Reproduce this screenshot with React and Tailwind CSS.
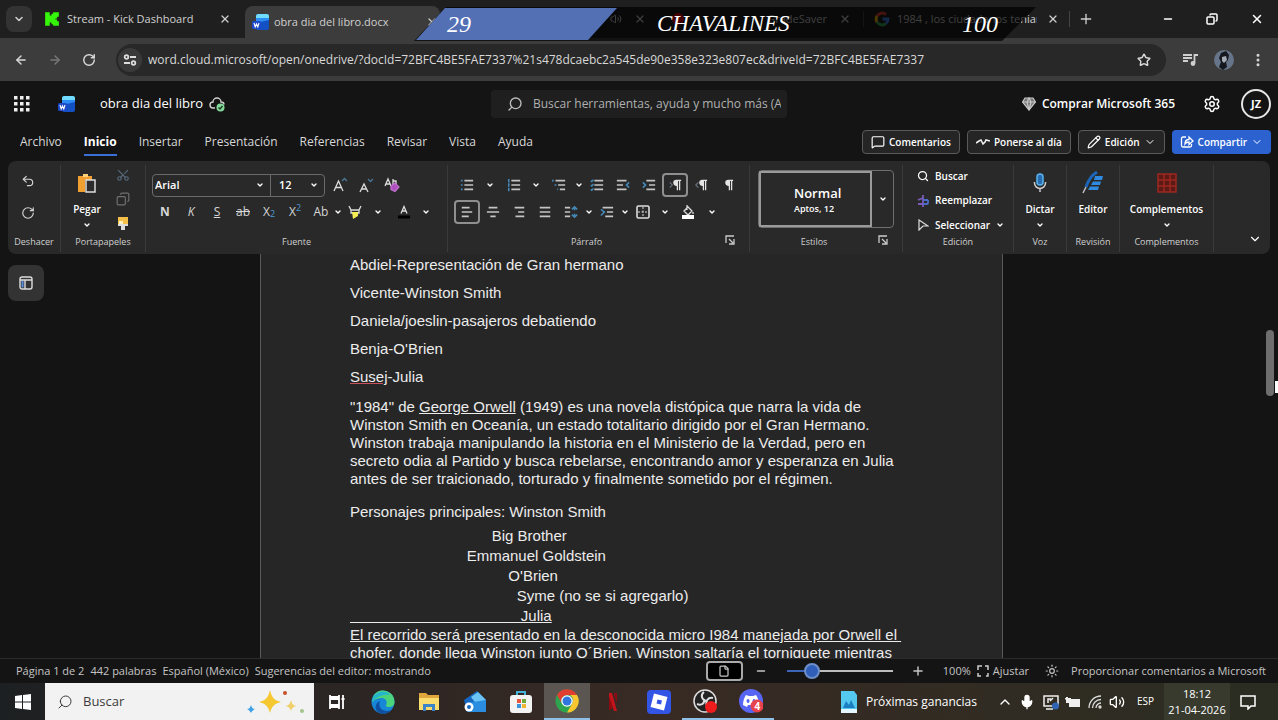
import React, { useState } from 'react';
import {
  ArrowLeft, ArrowRight, ChevronDown, ChevronUp, Copy, Minus, Mic, Plus, RotateCw, Scissors,
  Search, Settings, Star, Undo2, Volume2, X, EllipsisVertical, MessageSquare, Pencil, File, Sun,
} from 'lucide-react';

const Chevron = ({ className = '' }) => (
  <span className={`flex shrink-0 items-center justify-center ${className}`}>
    <ChevronDown className="size-2" strokeWidth={4} />
  </span>
);

const Tool = ({ label, className = 'w-[26px]', active, children }) => (
  <button
    aria-label={label}
    className={`flex h-6 shrink-0 items-center justify-center text-[#d6d6d6] ${className} ${active ? 'rounded border-2 border-[#8f8f8f]' : ''}`}
  >
    {children}
  </button>
);

const Lines = ({ rows, blue }) => (
  <svg viewBox="0 0 16 16" className="size-3.5" fill="none" strokeWidth="1.8">
    <path stroke="#c4c4c4" d={rows} />
    {blue && <path stroke="#4389b8" strokeWidth="1.8" d={blue} />}
  </svg>
);

const Pilcrow = ({ arrow }) => (
  <svg viewBox="0 0 16 16" className="size-3.5">
    <path fill="#e4e4e4" d="M9 2h6v1.500h-1V14h-1.400V3.500H11.500V14H10V9A3.500 3.500 0 0 1 9 2z" />
    {arrow && <path d={arrow} fill="none" stroke="#68737e" strokeWidth="1.300" />}
  </svg>
);

const WordLogo = () => (
  <svg viewBox="0 0 18 18" className="size-[18px] shrink-0">
    <path fill="#6fdcff" d="M6 1h9a2 2 0 0 1 2 2v4H4V3a2 2 0 0 1 2-2z" />
    <path fill="#2b8df5" d="M4 5h13v7H4z" />
    <path fill="#1350c4" d="M4 10l13-3v8a2 2 0 0 1-2 2H6a2 2 0 0 1-2-2z" />
    <rect x="0" y="8" width="9" height="8" rx="1.500" fill="#1d49c9" />
    <path d="M2 10l1.200 4L4.500 11l1.300 3L7 10" fill="none" stroke="#fff" strokeWidth="1.100" />
  </svg>
);

const GoogleLogo = () => (
  <svg viewBox="0 0 16 16" className="size-4 shrink-0" fill="none" strokeWidth="3">
    <path stroke="#ea4335" d="M3 5a6 6 0 0 1 9-1.500" />
    <path stroke="#fbbc05" d="M3 11a6 6 0 0 1 0-6" />
    <path stroke="#34a853" d="M12 12.500A6 6 0 0 1 3 11" />
    <path stroke="#4285f4" d="M8.500 8H14a6 6 0 0 1-2 4.500" />
  </svg>
);

const BrowserTabs = () => (
  <div className="relative flex h-[38px] shrink-0 items-center bg-[#1f1f1f] text-[11px] text-[#d0d0d0]">
    <button aria-label="Buscar pestañas" className="ml-1.5 flex size-[26px] items-center justify-center rounded-lg bg-[#333]">
      <ChevronDown className="size-3" strokeWidth={3} />
    </button>
    <div className="ml-3 flex w-[201px] items-center">
      <svg viewBox="0 0 14 14" className="size-4"><path fill="#35f50a" d="M1 1h4v3h1.500V2.500H8V1h5v4h-1.500v1.500H10v1h1.500V9H13v4H8v-1.500H6.500V10H5v3H1z" /></svg>
      <span className="ml-[7px] flex-1 whitespace-nowrap">Stream - Kick Dashboard</span>
      <button aria-label="Cerrar" className="mr-3.5"><X className="size-3" strokeWidth={2.5} /></button>
    </div>
    <div className="flex h-8 w-[195px] items-center self-end rounded-t-lg bg-[#3c3c3c] pl-[7px] pr-0.5">
      <WordLogo />
      <span className="ml-1 flex-1 whitespace-nowrap">obra dia del libro.docx</span>
      <button aria-label="Cerrar"><X className="size-3" strokeWidth={2.5} /></button>
    </div>
    <div className="flex w-[208px] items-center justify-end gap-3 pr-0.5">
      <Volume2 className="size-3" />
      <button aria-label="Cerrar"><X className="size-3" strokeWidth={2.5} /></button>
    </div>
    <div className="flex w-[216px] items-center border-r border-[#444] pl-6 pr-3">
      <span className="size-3 rounded-full bg-red-600" />
      <span className="mr-3 flex-1 text-right">GradeSaver</span>
      <button aria-label="Cerrar"><X className="size-3" strokeWidth={2.5} /></button>
    </div>
    <div className="flex w-[206px] items-center border-r border-[#444] px-2.5">
      <GoogleLogo />
      <span className="ml-[7px] w-[140px] overflow-hidden whitespace-nowrap">1984 , los ciudadanos tenian</span>
      <button aria-label="Cerrar" className="ml-auto"><X className="size-3" strokeWidth={2.5} /></button>
    </div>
    <button aria-label="Nueva pestaña" className="ml-2"><Plus className="size-4" /></button>
    <div className="ml-auto flex items-center gap-8 pr-3.5 text-white">
      <button aria-label="Minimizar"><Minus className="size-3" strokeWidth={3} /></button>
      <button aria-label="Restaurar"><Copy className="size-3 -scale-x-100" strokeWidth={3} /></button>
      <button aria-label="Cerrar ventana"><X className="size-3.5" strokeWidth={2.5} /></button>
    </div>

    {/* stream scoreboard */}
    <div className="absolute left-[414px] top-[7px] z-10 h-[34px] w-[622px] font-['Liberation_Serif',serif] text-2xl italic text-white">
      <div className="absolute inset-0 bg-black/70 [clip-path:polygon(32px_0,100%_0,588px_100%,0_100%)]" />
      <div className="absolute left-0.5 top-px h-8 w-[201px] bg-[#5370b5] [clip-path:polygon(29px_0,100%_0,172px_100%,0_100%)]" />
      <div className="relative flex h-full items-center">
        <span className="w-[243px] pl-[33px]">29</span>
        <span className="flex-1 text-[23px]">CHAVALINES</span>
        <span className="pr-[38px]">100</span>
      </div>
    </div>
  </div>
);

const AddressBar = () => (
  <div className="flex h-[43px] shrink-0 items-center bg-[#3c3c3c] text-[#d8d8d8]">
    <button aria-label="Atrás" className="ml-3.5"><ArrowLeft className="size-3.5" strokeWidth={2.5} /></button>
    <button aria-label="Adelante" className="ml-5 text-[#777]"><ArrowRight className="size-3.5" strokeWidth={2.5} /></button>
    <button aria-label="Recargar" className="ml-5"><RotateCw className="size-3.5" strokeWidth={2.5} /></button>
    <div className="ml-5 flex h-8 flex-1 items-center rounded-full bg-[#282828]">
      <span className="ml-0.5 flex size-6 items-center justify-center rounded-full bg-[#3a3a3a]">
        <svg viewBox="0 0 14 14" className="size-3.5" fill="none" stroke="#ddd" strokeWidth="1.800"><circle cx="3.500" cy="4" r="1.800" /><path d="M7 4h6M1 10h6" /><circle cx="10.500" cy="10" r="1.800" /></svg>
      </span>
      <input
        aria-label="Dirección"
        className="ml-1.5 min-w-0 flex-1 bg-transparent text-xs outline-none"
        defaultValue="word.cloud.microsoft/open/onedrive/?docId=72BFC4BE5FAE7337%21s478dcaebc2a545de90e358e323e807ec&driveId=72BFC4BE5FAE7337"
      />
      <button aria-label="Favorito" className="mr-[15px]"><Star className="size-3.5" strokeWidth={2.5} /></button>
    </div>
    <svg viewBox="0 0 16 16" className="ml-4 size-4" fill="none" stroke="#cfcfcf" strokeWidth="1.800"><path d="M1 3h9M1 6h9M1 9h5M12.500 11V3H16" /><circle cx="11" cy="11.500" r="1.500" fill="#cfcfcf" /></svg>
    <svg viewBox="0 0 20 20" className="ml-4 size-5"><circle cx="10" cy="10" r="10" fill="#66758a" /><path fill="#15181e" d="M7 3l5-2 3 4-1 5-2 2 1 5-4 3-4-3 2-5-2-4z" /><path fill="#a4abb5" d="M8 7l4-1 1 4-3 3-2-2z" /></svg>
    <button aria-label="Menú" className="ml-4 mr-3"><EllipsisVertical className="size-4" strokeWidth={2.5} /></button>
  </div>
);

const WordHeader = () => (
  <div className="grid h-[46px] shrink-0 grid-cols-[1fr_296px_1fr] items-center">
    <div className="flex items-center">
      <svg viewBox="0 0 16 16" className="ml-3.5 size-4" fill="#eee"><path d="M0 0h3.500v3.500H0zM6 0h3.500v3.500H6zM12 0h3.500v3.500H12zM0 6h3.500v3.500H0zM6 6h3.500v3.500H6zM12 6h3.500v3.500H12zM0 12h3.500v3.500H0zM6 12h3.500v3.500H6zM12 12h3.500v3.500H12z" /></svg>
      <span className="ml-7"><WordLogo /></span>
      <h1 className="ml-6 text-[13px]">obra dia del libro</h1>
      <svg viewBox="0 0 16 16" className="ml-1.5 size-4" fill="none" stroke="#cfcfcf" strokeWidth="1.400"><path d="M6 12H4a3 3 0 0 1 0-6 4 4 0 0 1 8 0c2 0 3 1 3 2.500" /><circle cx="11.500" cy="11.500" r="4" fill="#84d99a" stroke="none" /><path stroke="#1c3a24" d="M9.500 11.500l1.500 1.500 2.500-3" /></svg>
    </div>
    <div className="flex h-7 items-center rounded bg-[#1f1f1f] pl-4 text-[#bdbdbd]">
      <Search className="size-4 -scale-x-100" />
      <input aria-label="Buscar" placeholder="Buscar herramientas, ayuda y mucho más (Alt + Q)" className="ml-2.5 mr-1.5 min-w-0 flex-1 bg-transparent text-xs outline-none placeholder:text-[#b0b0b0]" />
    </div>
    <div className="flex items-center justify-end">
      <svg viewBox="0 0 14 14" className="size-3.5" fill="none" stroke="#c8c8c8" strokeWidth="1.200"><path fill="#777" d="M3 1h8l2.500 4L7 13 .5 5z" /><path d="M.5 5h13M5 5l2 8 2-8-2-4z" /></svg>
      <button className="ml-1.5 text-xs font-semibold">Comprar Microsoft 365</button>
      <button aria-label="Configuración" className="ml-7"><Settings className="size-[18px]" /></button>
      <button className="ml-5 mr-[7px] size-[30px] rounded-full border-2 border-[#e6e6e6] text-[11px] font-bold">JZ</button>
    </div>
  </div>
);

const tabs = ['Archivo', 'Inicio', 'Insertar', 'Presentación', 'Referencias', 'Revisar', 'Vista', 'Ayuda'];

const actionButton = 'flex h-6 items-center gap-1 rounded border border-[#5a5a5a] bg-[#252525] px-2 text-[10px] font-semibold';

const RibbonTabs = () => {
  const [current, setCurrent] = useState('Inicio');
  return (
    <div className="flex h-[30px] shrink-0 items-center justify-between pl-5 pr-[7px]">
      <nav className="flex gap-[22px] pt-0.5 text-xs text-[#d8d8d8]">
        {tabs.map((tab) => (
          <button
            key={tab}
            onClick={() => setCurrent(tab)}
            className={tab === current ? 'border-b-2 border-[#3b6fd4] font-bold leading-6 text-white' : 'border-b-2 border-transparent leading-6'}
          >
            {tab}
          </button>
        ))}
      </nav>
      <div className="flex gap-[7px]">
        <button className={actionButton}><MessageSquare className="size-3.5" />Comentarios</button>
        <button className={actionButton}>
          <svg viewBox="0 0 14 14" className="size-3.5" fill="none" stroke="#eee" strokeWidth="1.600"><path d="M0 8l3-2 2-1 2 4 2-2 1-2 4 1" /></svg>
          Ponerse al día
        </button>
        <button className={actionButton}><Pencil className="size-3.5" />Edición<ChevronDown className="size-3" /></button>
        <button className="flex h-6 items-center gap-1 rounded bg-[#2c62d0] px-2 text-[10px] font-semibold">
          <svg viewBox="0 0 14 14" className="size-3.5" fill="none" stroke="#fff" strokeWidth="1.300"><path d="M6 2H3a1.500 1.500 0 0 0-1.500 1.500v7A1.500 1.500 0 0 0 3 12h7a1.500 1.500 0 0 0 1.500-1.500V9M5 9c0-3 2-4.500 4-4.500V2l4 4-4 3.500V7C7.500 7 6 7.500 5 9z" /></svg>
          Compartir<ChevronDown className="size-3" />
        </button>
      </div>
    </div>
  );
};

const Group = ({ title, className, launcher, children }) => (
  <section className={`relative flex shrink-0 flex-col border-r border-[#3a3a3a] ${className}`}>
    <div className="min-h-0 flex-1">{children}</div>
    <h2 className="h-5 shrink-0 text-center text-[9px] leading-5 text-[#d0d0d0]">{title}</h2>
    {launcher && (
      <svg viewBox="0 0 10 10" className="absolute bottom-[7px] right-3.5 size-2.5" fill="none" stroke="#ccc" strokeWidth="1.300"><path d="M1 8V1h8M4 4l4 4M9 4v5H4" /></svg>
    )}
  </section>
);

const BigButton = ({ icon, label, menu }) => (
  <button className="flex w-full flex-col items-center pt-2 text-[10px] font-semibold">
    {icon}
    <span className="mt-2 leading-4">{label}</span>
    {menu && <Chevron className="h-4" />}
  </button>
);

const bars = 'M5 3h10M5 8h10M5 13h10';

const Ribbon = () => (
  <div className="mx-2 mt-1 flex h-[93px] shrink-0 overflow-hidden rounded-lg bg-[#292929] pb-0.5 pt-1">
    <Group title="Deshacer" className="w-[53px]">
      <div className="flex flex-col items-start gap-2 pl-[7px] pt-1">
        <Tool label="Deshacer"><Undo2 className="size-3.5" /></Tool>
        <Tool label="Rehacer"><RotateCw className="size-3.5" /></Tool>
      </div>
    </Group>

    <Group title="Portapapeles" className="w-[85px]">
      <div className="flex">
        <div className="w-[52px]">
          <BigButton
            label="Pegar"
            menu
            icon={<svg viewBox="0 0 20 20" className="size-5"><path fill="#f0a030" d="M1 3h5V1h5v2h4v4H8v12H1z" /><path fill="#ffd27a" d="M6 1h5v3H6z" /><path d="M9 7h9v12H9z" fill="#2c2c2c" stroke="#ddd" strokeWidth="1.500" /></svg>}
          />
        </div>
        <div className="-mt-0.5 flex w-5 flex-col items-center">
          <Tool label="Cortar"><Scissors className="size-3.5 -rotate-90 text-[#56697a]" /></Tool>
          <Tool label="Copiar"><Copy className="size-3.5 -scale-x-100 text-[#707070]" /></Tool>
          <Tool label="Copiar formato">
            <svg viewBox="0 0 14 14" className="size-3.5"><path fill="#f5c04a" d="M2 1h10v7H2z" /><path fill="#fff3c4" d="M3 5h4v3H3z" /><path fill="#ddd" d="M2 8h10v2H9v4H5v-4H2z" /></svg>
          </Tool>
        </div>
      </div>
    </Group>

    <Group title="Fuente" className="w-[302px]">
      <div className="flex items-center pl-1.5 pt-2">
        <div className="mr-0.5 flex h-[23px] rounded border border-[#6a6a6a] text-[11px] font-semibold">
          <div className="relative w-[118px] border-r border-[#6a6a6a]">
            <select aria-label="Fuente" className="h-full w-full appearance-none bg-transparent pl-0.5 outline-none"><option>Arial</option></select>
            <Chevron className="pointer-events-none absolute inset-y-0 right-1.5" />
          </div>
          <div className="relative w-[53px]">
            <select aria-label="Tamaño de fuente" className="h-full w-full appearance-none bg-transparent pl-2 outline-none"><option>12</option></select>
            <Chevron className="pointer-events-none absolute inset-y-0 right-1.5" />
          </div>
        </div>
        <Tool label="Aumentar">
          <svg viewBox="0 0 16 16" className="size-4" fill="none" stroke="#ddd" strokeWidth="1.300"><path d="M2 14L6.500 4 11 14M3.500 10.500h6" /><path stroke="#4a7898" d="M10 4l2.500-2.500L15 4" /></svg>
        </Tool>
        <Tool label="Disminuir">
          <svg viewBox="0 0 16 16" className="size-4" fill="none" stroke="#ddd" strokeWidth="1.300"><path d="M2 15L6 7l4 8M3.500 12h5" /><path stroke="#4a7898" d="M10 2l2.500 2.500L15 2" /></svg>
        </Tool>
        <Tool label="Borrar formato">
          <svg viewBox="0 0 16 16" className="size-4" fill="none" stroke="#ddd" strokeWidth="1.300"><path d="M1 9l3-7 3 7M2 7h4" /><path d="M9 2v6h3V4H9" /><path fill="#b04fc0" stroke="#c070cc" d="M7 9l4-3 4 4-4 4.500-4-2z" /></svg>
        </Tool>
      </div>
      <div className="flex items-center pl-1.5 pt-[3px] text-xs">
        <Tool label="Negrita"><b>N</b></Tool>
        <Tool label="Cursiva"><i>K</i></Tool>
        <Tool label="Subrayado"><u>S</u></Tool>
        <Tool label="Tachado"><s>ab</s></Tool>
        <Tool label="Subíndice">X<sub className="text-[9px] text-[#4a9bd6]">2</sub></Tool>
        <Tool label="Superíndice">X<sup className="text-[9px] text-[#4a9bd6]">2</sup></Tool>
        <Tool label="Mayúsculas y minúsculas">Ab</Tool>
        <Chevron className="w-2" />
        <Tool label="Resaltar">
          <svg viewBox="0 0 14 14" className="size-3.5" fill="none" stroke="#ddd" strokeWidth="1.300"><path d="M1 1l2 4h8l2-4M3 5v3h8V5" /><path fill="#f5ee55" stroke="none" d="M4 7h6v4l-5 3z" /></svg>
        </Tool>
        <Chevron className="w-5" />
        <Tool label="Color de fuente" className="w-8">
          <svg viewBox="0 0 14 14" className="size-3.5" fill="none" stroke="#ddd" strokeWidth="1.300"><path d="M4 8.500l3-7 3 7M5 6h4" /><path stroke="#000" strokeWidth="3" d="M1 12h12" /></svg>
        </Tool>
        <Chevron className="w-3" />
      </div>
    </Group>

    <Group title="Párrafo" className="w-[302px] pr-6" launcher>
      <div className="flex items-center pl-1.5 pt-2">
        <Tool label="Viñetas"><Lines rows={bars} blue="M1 3h2M1 8h2M1 13h2" /></Tool>
        <Chevron className="w-5" />
        <Tool label="Numeración" className="w-7"><Lines rows={bars} blue="M2 1v4M2 6v4M2 11v4" /></Tool>
        <Chevron className="w-4" />
        <Tool label="Lista multinivel" className="w-[30px]"><Lines rows="M4 3h11M7 8h8M9 13h6" blue="M0 3h2M3 8h2M6 13h1" /></Tool>
        <Chevron className="w-2.5" />
        <Tool label="Lista"><Lines rows={bars} blue="M1 3l1 1 2-2M1 8l1 1 2-2M1 13l1 1 2-2" /></Tool>
        <Tool label="Reducir sangría"><Lines rows="M1 3h11M1 8h7M1 13h11" blue="M15 5l-3 3 3 3" /></Tool>
        <Tool label="Aumentar sangría"><Lines rows="M5 3h10M8 8h7M5 13h10" blue="M1 5l3 3-3 3" /></Tool>
        <Tool label="Izquierda a derecha" active><Pilcrow arrow="M2 5l3 3-3 3" /></Tool>
        <Tool label="Derecha a izquierda"><Pilcrow arrow="M5 5L2 8l3 3" /></Tool>
        <Tool label="Mostrar marcas"><Pilcrow /></Tool>
      </div>
      <div className="flex items-center pl-1.5 pt-[3px]">
        <Tool label="Alinear a la izquierda" active><Lines rows="M2 3h9M2 8h12M2 13h8" /></Tool>
        <Tool label="Centrar"><Lines rows="M3 3h10M1 8h14M5 13h6" /></Tool>
        <Tool label="Alinear a la derecha"><Lines rows="M3 3h11M7 8h7M4 13h10" /></Tool>
        <Tool label="Justificar"><Lines rows="M2 3h12M2 8h12M2 13h12" /></Tool>
        <Tool label="Interlineado"><Lines rows="M1 3h6M1 8h6M1 13h6" blue="M9 5l3-3 3 3M12 2v4M9 11l3 3 3-3M12 14v-4" /></Tool>
        <Chevron className="w-2.5" />
        <Tool label="Espaciado"><Lines rows="M3 3h12M8 8h7M6 13h9" blue="M1 5l4 3-4 4" /></Tool>
        <Chevron className="w-2.5" />
        <Tool label="Bordes">
          <svg viewBox="0 0 14 14" className="size-3.5" fill="none" stroke="#ddd"><rect x="1" y="1" width="12" height="12" rx="1.500" strokeWidth="1.600" /><path strokeDasharray="2 1.500" d="M7 2v10M2 7h10" /></svg>
        </Tool>
        <Chevron className="w-[18px]" />
        <Tool label="Sombreado" className="w-7">
          <svg viewBox="0 0 14 14" className="size-3.5" fill="none" stroke="#ddd" strokeWidth="1.300"><path d="M6 0v5M3 6l4-4 4 4-4 4zM12 7v2" /><path fill="#fff" stroke="none" d="M1 10h12v4H1z" /></svg>
        </Tool>
        <Chevron className="w-5" />
      </div>
    </Group>

    <Group title="Estilos" className="w-[153px] pr-6" launcher>
      <div className="ml-2 mt-[5px] flex h-[58px] w-[136px] rounded border border-[#6f6f6f]">
        <button className="flex w-[113px] shrink-0 flex-col items-start justify-center border-2 border-[#9a9a9a] pl-[33px]">
          <span className="text-[13px] font-semibold leading-5">Normal</span>
          <span className="text-[9px] font-semibold leading-3">Aptos, 12</span>
        </button>
        <Chevron className="flex-1" />
      </div>
    </Group>

    <Group title="Edición" className="w-[111px]">
      <div className="-mt-px flex flex-col items-start pl-3.5 text-[10px] font-semibold">
        <button className="flex h-6 items-center gap-1.5"><Search className="size-3" strokeWidth={2.5} />Buscar</button>
        <button className="flex h-[25px] items-center gap-1.5">
          <svg viewBox="0 0 12 12" className="size-3" fill="none" strokeWidth="1.800"><path stroke="#7a5bb8" d="M6 0v12M1 5l5-2M1 9h5" /><path stroke="#4c6bc6" d="M6 5h5M6 9h4a1 1 0 0 0 1-1V5" /></svg>
          Reemplazar
        </button>
        <button className="flex h-6 items-center gap-1.5">
          <svg viewBox="0 0 12 12" className="size-3" fill="none" stroke="#ddd" strokeWidth="1.200"><path d="M2 1l9 6H6l-4 4z" /></svg>
          Seleccionar<Chevron />
        </button>
      </div>
    </Group>

    <Group title="Voz" className="w-[53px]">
      <BigButton label="Dictar" menu icon={<svg viewBox="0 0 20 20" className="size-5" fill="none"><rect x="7" y="1" width="6" height="11" rx="3" fill="#2a6cb0" stroke="#55b4f0" strokeWidth="1.500" /><path stroke="#ccc" strokeWidth="1.500" d="M4.500 9v1a5.500 5.500 0 0 0 11 0V9M10 15.500V19" /></svg>} />
    </Group>
    <Group title="Revisión" className="w-[53px]">
      <BigButton label="Editor" icon={<svg viewBox="0 0 20 20" className="size-5 overflow-visible" fill="none"><path fill="#2f8be0" d="M12 3h8l-1 4h-8zM10 8.500h8l-1 3.500H8zM7 13.500h9l-1 3.500H5z" /><path stroke="#1c66b8" strokeWidth="3" d="M14-1C9 2 5 8 3 14" /><path stroke="#bbb" strokeWidth="1.500" d="M3 14l-3 6" /></svg>} />
    </Group>
    <Group title="Complementos" className="w-[94px]">
      <BigButton label="Complementos" menu icon={<svg viewBox="0 0 20 20" className="size-5" fill="none" stroke="#9c2820" strokeWidth="1.500"><rect x="1" y="1" width="18" height="18" fill="#5c1a17" /><path d="M1 7h18M1 13h18M7 1v18M13 1v18" /></svg>} />
    </Group>
    <button aria-label="Contraer cinta" className="ml-auto mr-2 self-end pb-1.5"><ChevronDown className="size-3.5" /></button>
  </div>
);

const cast = [
  'Abdiel-Representación de Gran hermano',
  'Vicente-Winston Smith',
  'Daniela/joeslin-pasajeros debatiendo',
  "Benja-O'Brien",
];

const characters = [
  { name: 'Big Brother', indent: 34 },
  { name: 'Emmanuel Goldstein', indent: 28 },
  { name: "O'Brien", indent: 38 },
  { name: 'Syme (no se si agregarlo)', indent: 40 },
];

const Document = () => (
  <main className="relative flex min-h-0 flex-1 overflow-hidden">
    <div className="relative flex min-w-0 flex-1 justify-center overflow-hidden">
      <button aria-label="Panel de navegación" className="absolute left-2 top-[11px] flex size-9 items-center justify-center rounded-lg bg-[#333]">
        <svg viewBox="0 0 14 14" className="size-3.5" fill="none" stroke="#ddd" strokeWidth="1.400"><rect x="1" y="1" width="12" height="12" rx="2" /><path stroke="#5b8fe0" strokeWidth="2" d="M3.500 4.500v7" /><path d="M1 4h12M6 4v9" /></svg>
      </button>
      <article className="h-[600px] w-full max-w-[743px] border-x border-[#5a5a5a] bg-[#262626] px-[89px] font-['Liberation_Sans',Arial,sans-serif] text-[15px] text-[#ececec]">
        <div className="-mt-[3px] leading-7">
          {cast.map((line) => <p key={line}>{line}</p>)}
          <p><span className="underline decoration-[#c8505a]">Susej</span>-Julia</p>
        </div>
        <p className="mt-[7px] w-[552px] leading-[18px]">
          "1984" de <u>George Orwell</u> (1949) es una novela distópica que narra la vida de<br />
          Winston Smith en Oceanía, un estado totalitario dirigido por el Gran Hermano.<br />
          Winston trabaja manipulando la historia en el Ministerio de la Verdad, pero en<br />
          secreto odia al Partido y busca rebelarse, encontrando amor y esperanza en Julia<br />
          antes de ser traicionado, torturado y finalmente sometido por el régimen.
        </p>
        <p className="mt-2.5 leading-7">Personajes principales: Winston Smith</p>
        <div className="whitespace-pre leading-5">
          {characters.map(({ name, indent }) => <p key={name}>{' '.repeat(indent) + name}</p>)}
          <p className="underline">{' '.repeat(41) + 'Julia'}</p>
        </div>
        <p className="whitespace-pre leading-[18px] underline">
          {'El recorrido será presentado en la desconocida micro I984 manejada por Orwell el \nchofer, donde llega Winston junto O´Brien. Winston saltaría el torniquete mientras'}
        </p>
      </article>
    </div>
    <div className="w-[15px] shrink-0 bg-[#141414] pt-[76px]">
      <div className="ml-[3px] h-[66px] w-2 rounded-full bg-[#6e6e6e]" />
    </div>
    {/* mouse pointer at the window edge */}
    <div className="absolute right-0 top-[127px] h-3 w-[3px] bg-white" />
  </main>
);

const StatusBar = () => (
  <footer className="flex h-[25px] shrink-0 items-center border-t border-[#2c2c2c] bg-[#141414] pl-4 pr-3 text-[11px] text-[#c4c4c4]">
    <div className="flex flex-1 gap-1.5 whitespace-nowrap">
      <span>Página 1 de 2</span>
      <span>442 palabras</span>
      <span>Español (México)</span>
      <span>Sugerencias del editor: mostrando</span>
    </div>
    <button aria-label="Vista de página" className="flex h-5 w-[37px] items-center justify-center rounded border-2 border-[#aaa] bg-black"><File className="size-3" strokeWidth={2.5} /></button>
    <button aria-label="Alejar" className="ml-3"><Minus className="size-3" strokeWidth={3} /></button>
    <div className="relative ml-5 flex h-4 w-[106px] items-center">
      <div className="h-0.5 w-6 bg-[#3b66b8]" />
      <div className="h-0.5 flex-1 bg-[#bdbdbd]" />
      <input type="range" aria-label="Zoom" defaultValue="22" className="absolute inset-0 w-full opacity-0" />
      <span className="pointer-events-none absolute left-[17px] size-4 rounded-full border-2 border-[#6f8fc8] bg-[#2f5fb8]" />
    </div>
    <button aria-label="Acercar" className="ml-[18px]"><Plus className="size-3.5" strokeWidth={2.5} /></button>
    <span className="ml-[18px]">100%</span>
    <svg viewBox="0 0 12 12" className="ml-1.5 size-3" fill="none" stroke="#ccc" strokeWidth="1.500"><path d="M1 5V1h4M8 1h3v4M11 8v3H9M4 11H1V8" /></svg>
    <button className="ml-1">Ajustar</button>
    <Sun className="ml-4 size-3.5" />
    <button className="ml-3 whitespace-nowrap">Proporcionar comentarios a Microsoft</button>
  </footer>
);

const TaskIcon = ({ label, active, open, children }) => (
  <button
    aria-label={label}
    className={`flex h-full w-[46px] shrink-0 items-center justify-center ${active ? 'bg-[#5b5651]' : ''} ${active || open ? 'border-b-2 border-[#8fc1e8]' : ''}`}
  >
    <svg viewBox="0 0 24 24" className="size-6">{children}</svg>
  </button>
);

const Taskbar = () => (
  <div className="flex h-[37px] shrink-0 items-center bg-linear-to-r from-[#1d2022] via-[#382a24] to-[#2b2d22] text-white">
    <button aria-label="Inicio" className="flex h-full w-[45px] items-center justify-center">
      <svg viewBox="0 0 16 16" className="size-4" fill="#fff"><path d="M0 2l7-1v6.500H0zM8 1l8-1v7.500H8zM0 8.500h7V15l-7-1zM8 8.500h8V16l-8-1z" /></svg>
    </button>
    <label className="flex h-full w-[269px] items-center bg-[#f2f2f2] pl-3 text-[#3c3c3c]">
      <Search className="size-4 -scale-x-100" strokeWidth={1.5} />
      <input aria-label="Buscar en Windows" placeholder="Buscar" className="ml-2.5 w-[163px] bg-transparent text-[13px] outline-none placeholder:text-[#3c3c3c]" />
      <svg viewBox="0 0 60 28" className="h-7 w-[60px]">
        <path fill="#f5c730" d="M24 2c2 8 4 10 11 12-7 2-9 4-11 11-2-7-4-9-11-11 7-2 9-4 11-12z" />
        <path fill="#f0cf68" d="M45 12c1 4 2 5 5 6-3 1-4 2-5 5-1-3-2-4-5-5 3-1 4-2 5-6z" />
        <path fill="#3ea0e8" d="M5 17c1 3 2 4 4 4-2 1-3 2-4 4-1-2-2-3-4-4 2 0 3-1 4-4z" />
        <circle cx="39" cy="5" r="2" fill="#c8502c" /><circle cx="56" cy="23" r="2" fill="#a5c58c" />
      </svg>
    </label>
    <TaskIcon label="Vista de tareas"><path d="M5 5v2h9V5M5 19v-2h9v2M5 9h9v6H5zM18 5v14M16.500 9h3" fill="none" stroke="#fff" strokeWidth="1.800" /></TaskIcon>
    <TaskIcon label="Edge">
      <circle cx="12" cy="12" r="11.500" fill="#1788d8" /><path fill="#4cd47c" d="M3 5a11.500 11.500 0 0 1 20.500 7c0 4-3 5-6 5-2 0-3-1-2-3 1-4-2-6-5-6-3 0-7 1-9 4 0-3 .5-5 1.500-7z" /><path fill="#25b5cf" d="M3 6c4-5 12-6 16-1-6-1-13 1-18 7 0-2 1-4 2-6z" /><path fill="#1050a0" d="M9 11c-2 5 1 10 7 10 2 0 4-1 5-2-3 5-10 6-14 3-4-3-3-9 2-11z" />
    </TaskIcon>
    <TaskIcon label="Explorador"><path fill="#e0a83c" d="M2 3h7l2 2h11v15H2z" /><path fill="#fbdc6e" d="M2 8h20v12H2z" /><path fill="#3c83c8" d="M6 14h12v7h-3v-4H9v4H6z" /></TaskIcon>
    <TaskIcon label="Correo"><path fill="#1667c0" d="M1 10L14 1l9 9v12H4z" /><path fill="#6cc3f5" d="M8 7l7-5 8 8-9 5z" /><path fill="#2a8de0" d="M4 13l19-3v12H5z" /><circle cx="6" cy="17" r="4.500" fill="#fff" /><circle cx="6" cy="17" r="2" fill="#1667c0" /></TaskIcon>
    <TaskIcon label="Tienda"><path d="M8 6V2h8v4" fill="none" stroke="#44b2d8" strokeWidth="2" /><rect x="1" y="5" width="22" height="18" rx="3" fill="#f3f3f3" /><path fill="#e8553c" d="M8 9h4v4H8z" /><path fill="#6cab3c" d="M13 9h4v4h-4z" /><path fill="#3c93d8" d="M8 14h4v4H8z" /><path fill="#efb635" d="M13 14h4v4h-4z" /></TaskIcon>
    <TaskIcon label="Chrome" active>
      <circle cx="12" cy="12" r="11.500" fill="#2da44e" /><path fill="#df3e30" d="M2 6a11.500 11.500 0 0 1 20 0H12a6 6 0 0 0-5 9z" /><path fill="#f9c630" d="M22 6a11.500 11.500 0 0 1-10 17.500L17.500 14A6 6 0 0 0 15 6z" /><circle cx="12" cy="12" r="5.800" fill="#fff" /><circle cx="12" cy="12" r="4.500" fill="#2f76e0" />
    </TaskIcon>
    <TaskIcon label="Netflix"><path fill="#c5131c" d="M8 3h3l5 18h-3L8 7z" /><path fill="#8c0c12" d="M8 6l3 9v4l-3 1zM13 3h3v10l-3-8z" /></TaskIcon>
    <TaskIcon label="Roblox"><rect x="0" y="0" width="24" height="24" rx="4" fill="#3355e6" /><path fill="#fff" fillRule="evenodd" d="M7 3.500l13.500 3.500L17 20.500 3.500 17zM10.500 9.500l-1 4 4.500 1 1-4z" /></TaskIcon>
    <TaskIcon label="OBS" open><circle cx="12" cy="12" r="11" fill="#222" stroke="#ddd" strokeWidth="1.500" /><path d="M11 3c-4 3-2 8 2 9M4 15c5 2 8-1 7-5M20 9c-5-1-8 3-6 8" fill="none" stroke="#ddd" strokeWidth="2" /><circle cx="18" cy="18" r="6" fill="#ee1c1c" /></TaskIcon>
    <TaskIcon label="Discord" open><circle cx="12" cy="12" r="12" fill="#5865f2" /><path fill="#fff" fillRule="evenodd" d="M7 6l3 1h4l3-1c2 3 3 6 3 10l-4 2-1-2H9l-1 2-4-2c0-4 1-7 3-10zM9 10a1.500 2 0 1 0 .1 0zM15 10a1.500 2 0 1 0 .1 0z" /><circle cx="18" cy="17" r="6.500" fill="#e8434c" /><text x="15.500" y="21" fontSize="10" fontWeight="bold" fill="#fff">4</text></TaskIcon>

    <div className="ml-auto flex h-full items-center">
      <svg viewBox="0 0 18 24" className="h-6 w-[18px]"><path fill="#55c8f0" d="M1 1h13l3 4v18H1z" /><path fill="#1b7fc4" d="M3 18l3-7 3 4 2-5 4 8z" /><path fill="#e4f6ff" d="M1 19h16v4H1z" /></svg>
      <span className="ml-2 whitespace-nowrap text-xs">Próximas ganancias</span>
      <ChevronUp className="ml-5 size-4" />
      <Mic className="ml-1.5 size-4 fill-white" />
      <svg viewBox="0 0 16 16" className="ml-2 size-4" fill="none" stroke="#eee" strokeWidth="1.500"><rect x="1" y="2" width="14" height="10" /><path d="M5 9V5h3M7 7l3-3M3 15h7" /><circle cx="12.500" cy="12" r="3.500" fill="#2f64b4" stroke="none" /></svg>
      <svg viewBox="0 0 16 16" className="ml-1.5 size-4" fill="#eee"><path d="M3 5h12v8H4V9H1V3h2z" /><path d="M0 4h6v1.500H0z" /></svg>
      <svg viewBox="0 0 16 16" className="ml-1.5 size-4" fill="none" stroke="#ddd" strokeWidth="1.300"><path d="M2 14A12 12 0 0 1 14 2M5.500 14A8.500 8.500 0 0 1 14 5.500M9 14a5 5 0 0 1 5-5" /><circle cx="13" cy="13" r="1" fill="#ddd" /></svg>
      <Volume2 className="ml-1.5 size-4" />
      <span className="ml-3 text-[10px]">ESP</span>
      <div className="ml-2.5 flex h-full w-[66px] flex-col justify-center bg-[#383a2e] text-center text-[11px] leading-4">
        <span>18:12</span>
        <span>21-04-2026</span>
      </div>
      <svg viewBox="0 0 16 16" className="ml-2.5 mr-[22px] size-4" fill="none" stroke="#fff" strokeWidth="1.500"><path d="M1 2h14v10h-4l-3 3v-3H1z" /></svg>
    </div>
  </div>
);

const App = () => (
  <div className="flex h-screen min-h-[480px] flex-col overflow-hidden bg-[#141414] font-['Open_Sans','Noto_Sans',sans-serif] text-white">
    <BrowserTabs />
    <AddressBar />
    <WordHeader />
    <RibbonTabs />
    <Ribbon />
    <Document />
    <StatusBar />
    <Taskbar />
  </div>
);

export default App;
